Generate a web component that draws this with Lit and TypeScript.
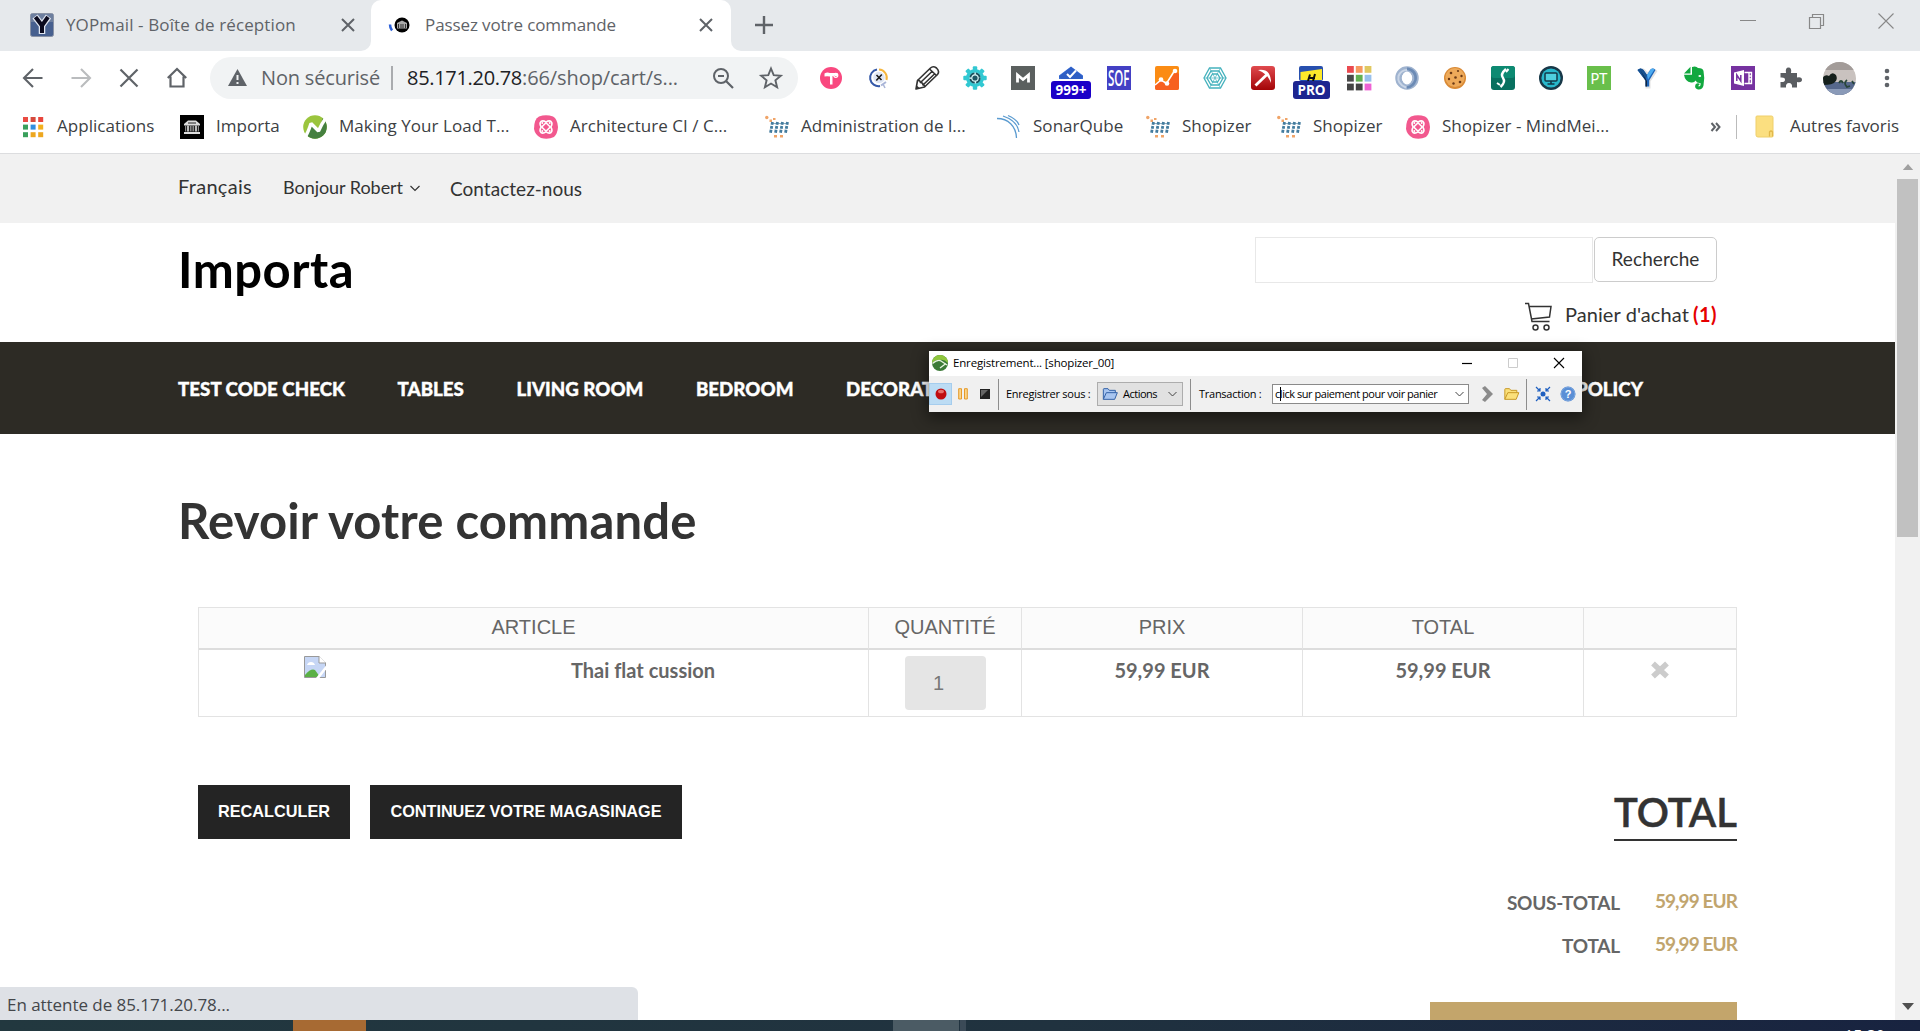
import { LitElement, html, svg, css } from "lit";
import { customElement } from "lit/decorators.js";

const icon = (body: unknown, size = 24) =>
  html`<svg class="ico" width=${size} height=${size} viewBox="0 0 24 24">${body}</svg>`;

const temple = svg`<path d="M4 9 L8 5.500 H16 L20 9 V10.500 H4Z" fill="#ddd"/><path d="M5 10.500h14v6H5z" fill="#888"/><path d="M4 17h16v2H4z" fill="#ddd"/><path d="M6.500 11v6M9.500 11v6M12 11v6M14.500 11v6M17.500 11v6M8 8h8" stroke="#222" stroke-width="1"/><path d="M8 10.500v6M16 10.500v6" stroke="#eee" stroke-width="1"/>`;

const dots = (cells: string[]) => cells.map((c, i) => svg`<rect x=${2 + (i % 3) * 7.6} y=${2 + Math.floor(i / 3) * 7.6} width="5" height="5" fill=${c}/>`);

const cartMark = svg`<g fill="#f0a468"><circle cx="1.800" cy="2.500" r="1.700"/><rect x="4.500" y="4.500" width="2.500" height="2.500"/><rect x="8" y="3" width="2.500" height="2"/><rect x="9" y="20" width="3" height="2.500"/><rect x="15" y="20" width="3" height="2.500"/></g><g fill="none" stroke="#447c9e" stroke-width="2.800" stroke-dasharray="2.900 1.100"><path d="M7.500 7L5.500 18"/><path d="M12.500 7L10.500 18"/><path d="M17.500 7L15.500 18"/><path d="M22.500 7L20.500 18"/></g><path d="M6 8.500h17" stroke="#447c9e" stroke-width="1" opacity=".6"/>`;
const pinkMark = svg`<path d="M5 1.500Q12-1 19 1.500 23.500 4 24 12 23.500 19 20 22 14 25 7 23 1 20 0 14 0 4 5 1.500Z" fill="#f2588e"/><g fill="none" stroke="#fff" stroke-width="1.600"><rect x="9" y="9" width="6" height="6" rx="1" transform="rotate(45 12 12)"/><path d="M12 7.200Q9 5 7 6.500 5 8.500 7.200 12 5 15.500 7 17.500 9 19 12 16.800 15 19 17 17.500 19 15.500 16.800 12 19 8.500 17 6.500 15 5 12 7.200Z"/></g><g fill="#fff"><circle cx="8.300" cy="8" r="1"/><circle cx="15.700" cy="8" r="1"/><circle cx="8.300" cy="16" r="1"/><circle cx="15.700" cy="16" r="1"/></g>`;
const leafMark = svg`<clipPath id="leaf"><circle cx="12" cy="12" r="11.800"/></clipPath><g clip-path="url(#leaf)"><rect width="24" height="24" fill="#9bc53d"/><path d="M0 24L7.500 8 15.500 17 20 2H24V24H0Z" fill="#45803f"/></g><path d="M1 24Q5 18 8 8.500L15.500 16Q18.500 9 23.500 2" fill="none" stroke="#fff" stroke-width="3.400" stroke-linejoin="bevel"/>`;
const sonarMark = svg`<g fill="none" stroke="#5b9bd0" stroke-width="1.300"><path d="M0 3.500C11 3.500 19 11 19.500 23"/><path d="M6 1C15 4 21 10 22 17"/><path d="M11 0.500C17 3 20.500 6 22 10"/></g>`;
const folderMark = svg`<path d="M1 2Q1 1 2 1H16.500Q18 1 18 2.500V21Q18 22 17 22H3Q1 22 1 20Z" fill="#fbdf80" stroke="#efcf6b"/><path d="M14.500 21.500V17Q16 15 17.500 17V21.500" fill="none" stroke="#e2b84a" stroke-width="1.300"/>`;

const bookmarks = [
  { i: svg`${dots(["#ea4b42", "#d64a3c", "#e8453c", "#3aa05c", "#2f8fe0", "#f2b01e", "#3aa05c", "#eda71f", "#eda71f"])}`, t: "Applications" },
  { i: svg`<rect width="24" height="24" fill="#000"/>${temple}`, t: "Importa" },
  { i: leafMark, t: "Making Your Load T..." },
  { i: pinkMark, t: "Architecture CI / C..." },
  { i: cartMark, t: "Administration de l..." },
  { i: sonarMark, t: "SonarQube" },
  { i: cartMark, t: "Shopizer" },
  { i: cartMark, t: "Shopizer" },
  { i: pinkMark, t: "Shopizer - MindMei..." },
];

const extensions = [
  svg`<circle cx="12" cy="12" r="11" fill="#f9487f"/><path d="M5.500 7.500Q8 6 11 7H18.500V10H16V9.500L13.500 10V18.500H11V10.500Q8 10 5.500 10.500Z" fill="#fff"/><circle cx="16.800" cy="9.300" r="2" fill="none" stroke="#fff" stroke-width="1.200"/>`,
  svg`<g fill="none" stroke-width="2"><path d="M10 3.500A8.300 8.300 0 0 0 13 20" stroke="#3458a8"/><path d="M12 3.500A8.300 8.300 0 0 1 19.500 14" stroke="#f6b63e"/><path d="M19 16L14 19.500" stroke="#aab6d8"/></g><circle cx="12" cy="11.500" r="5.800" fill="#dfe6f5"/><path d="M9.500 9l5 5M14.800 8.500l-5.500 6" stroke="#1a1a1a" stroke-width="1.600"/><path d="M16 18l2 4" stroke="#aab6d8" stroke-width="1.500"/>`,
  svg`<g fill="none" stroke="#333" stroke-width="1.600" stroke-linejoin="round"><path d="M1 23L2.500 14.500 15.500 2Q18-.5 21.500 2 25 5.500 22.500 8.500L9.500 21Z"/><path d="M2.500 14.500Q5 14 5.500 16.500 8 16.500 8 19 10 19 9.500 21M5.500 16.500L17.500 5M8 19L20 7.500M14.500 3L21.500 9.500"/></g><path d="M1 23l.8-3.500 2.700 2.600z" fill="#333"/>`,
  svg`<g fill="#32c8d2"><circle cx="12" cy="12" r="9"/>${[0, 45, 90, 135].map(a => svg`<rect x="9.800" y="0.300" width="4.400" height="23.400" rx="1" transform="rotate(${a} 12 12)"/>`)}</g><circle cx="12" cy="12" r="5.500" fill="#d8f3f5"/><circle cx="12" cy="12" r="4.700" fill="none" stroke="#194e5c" stroke-width="1.800" stroke-dasharray="6 1.500"/><circle cx="12" cy="12" r="2.600" fill="#1f5664"/>`,
  svg`<rect width="24" height="24" fill="#5b605f"/><path d="M6.500 16.500V9L12 13.500 17.500 9V16.500" fill="none" stroke="#fff" stroke-width="2.800"/>`,
  svg`<path d="M0 13V9.500L12 .5 24 9.500V13Z" fill="#3a6fd8"/><path d="M0 10.500L12 1l12 9.500-2 2.500H2Z" fill="#2f5fc4"/><path d="M8 8l3 3 6-6.500" fill="none" stroke="#fff" stroke-width="2"/>`,
  svg`<rect width="24" height="24" fill="#4340c4"/><text x="1" y="20" font-family="Open Sans, sans-serif" font-weight="600" font-size="21" fill="#fff" textLength="21.500" lengthAdjust="spacingAndGlyphs">SOF</text>`,
  svg`<rect width="24" height="24" rx="2" fill="#fb8c14"/><path d="M0 18L6 13 12 17 21 5 24 8V22Q24 24 22 24H2Q0 24 0 22Z" fill="#f7601f"/><path d="M0 19L6 14 11.500 17.500 19 5.500" fill="none" stroke="#fff" stroke-width="1.600"/><g fill="#fff"><circle cx="6" cy="13.500" r="2.300"/><circle cx="12" cy="17.500" r="2.300"/><circle cx="20" cy="5" r="2.300"/></g>`,
  svg`<g fill="none" stroke="#45b2bd" stroke-width="1.300"><path d="M6.500 2H17.500L23 12 17.500 22H6.500L1 12Z"/><path d="M8 5H16L20 12 16 19H8L4 12Z"/><path d="M9.500 8H14.500L17 12 14.500 16H9.500L7 12Z"/><path d="M1 12H23M6.500 2L17.500 22M17.500 2L6.500 22" stroke-width=".7"/></g>`,
  svg`<linearGradient id="rg" x2="0" y2="1"><stop stop-color="#e04a4e"/><stop offset="1" stop-color="#a30407"/></linearGradient><rect width="24" height="24" rx="3" fill="url(#rg)"/><path d="M4.500 19.500L17 7.500" stroke="#fff" stroke-width="2.800"/><path d="M7 4Q20 2 20 17 17 10 14.500 8.500 12 6 7 4Z" fill="#fff"/>`,
  svg`<rect width="24" height="15" rx="2" fill="#274fae"/><path d="M1.500 6L23 3V14H1.500Z" fill="#fde92a"/><path d="M9 15L11 8.500M14 15L16 8M10 12h6" stroke="#111" stroke-width="2"/>`,
  svg`${["#ea4a50", "#f69a60", "#e0c860", "#4a4a4a", "#62b052", "#98c0ec", "#444", "#444", "#ee62d4"].map((c, i) => svg`<rect x=${(i % 3) * 8.8} y=${Math.floor(i / 3) * 8.8} width="6.800" height="6.800" fill=${c}/>`)}`,
  svg`<circle cx="12" cy="12" r="8.500" fill="none" stroke="#9fb3cf" stroke-width="6.500"/><path d="M12 2.500Q22 5 20.500 14 18 21 12 21.500" fill="none" stroke="#6c8bb5" stroke-width="2.500"/><path d="M11 21.500Q2 18 3.500 10 6 4 12 4" fill="none" stroke="#c9d5e6" stroke-width="2"/><ellipse cx="12" cy="12" rx="5" ry="6.500" fill="#fff"/>`,
  svg`<circle cx="12" cy="12" r="11" fill="#d98a35"/><circle cx="12" cy="11.500" r="9.600" fill="#eeaa5a"/><g fill="#6b3a16"><circle cx="8" cy="7" r="1.300"/><circle cx="15" cy="5" r="1.100"/><circle cx="18.500" cy="10" r="1.200"/><circle cx="12.500" cy="11.500" r="1.300"/><circle cx="6" cy="13" r="1.200"/><circle cx="10.500" cy="17.500" r="1.200"/><circle cx="17" cy="16" r="1.300"/></g>`,
  svg`<rect width="24" height="24" rx="3" fill="#08705f"/><rect width="24" height="12" rx="3" fill="#0d8a72"/><path d="M15 3Q9 8 12 12 15 16 9.500 21" fill="none" stroke="#fff" stroke-width="2.400"/><path d="M15 6l2.500-3M9 19l-3-2" stroke="#fff" stroke-width="2"/>`,
  svg`<circle cx="12" cy="12" r="12" fill="#183848"/><circle cx="12" cy="12" r="9.600" fill="#28b8cc"/><rect x="6" y="7" width="12" height="8" rx="1" fill="#4fd0df" stroke="#12394a" stroke-width="1.500"/><path d="M12 15v3M8.500 18h7" stroke="#12394a" stroke-width="1.600"/>`,
  svg`<rect width="24" height="24" fill="#69bf4b"/><text x="3.500" y="17.500" font-family="Lato, sans-serif" font-weight="400" font-size="15.500" fill="#fff" textLength="17" lengthAdjust="spacingAndGlyphs">PT</text>`,
  svg`<path d="M4 3.500Q8 0 12.500 6 18 0 22.500 5L15.500 15.500V22.500H10.500V15.500Z" fill="#e2e2e2"/><path d="M2.500 4Q5.500 1 8.500 4L12 9 15.500 3.500Q18 1.500 20.500 4L14.200 14.500V20.500H10.500V14.500Z" fill="#1b63b8"/><path d="M2.500 4Q5.500 1 8.500 4L12 9 10.500 14.500Z" fill="#16508f"/><path d="M5.500 4.500L12 15V20.500H10.500V14.500Z" fill="#10243f"/><path d="M12 9l4-6q2-1 3.500 .5l-6.500 10z" fill="#4cabf0"/>`,
  svg`<path d="M1 7.500L7.500 .8V7.500ZM9 1Q13-.5 15 2 20 2 20.500 5 22 12 20.500 19.500 19.500 24 15 23.500 11 22.500 12.500 18.500 14.500 16.500 17 18 15 19 15.500 20.500 18 20.500 17.500 17 14 17.500 12.500 14.500 11.500 17 8 16.500 2 15.500 1 8.700H9Z" fill="#12a83f"/><ellipse cx="16.800" cy="10" rx="1.400" ry=".9" fill="#fff"/>`,
  svg`<rect width="24" height="24" fill="#7632a0"/><path d="M3 6.500L13 4V20L3 17.500Z" fill="#fff"/><path d="M13.500 6.500H20.500V17.500H13.500M18 7v10M20 10h-2M20 13h-2" fill="none" stroke="#fff" stroke-width="1.400"/><path d="M5.800 15V9l4 6V9" fill="none" stroke="#7632a0" stroke-width="1.500"/>`,
  svg`<path d="M2 7H7.500Q6.500 1.500 10 1.500 13.500 1.500 12.500 7H18.500V11.500Q23.500 10.500 23.500 13.800 23.500 17 18.500 16V21.500H13.500Q14 17 10.500 17 7 17 7.500 21.500H2V16Q6.500 16.500 6.500 13.800 6.500 11 2 11.500Z" fill="#5a5d61" transform="translate(-.5 0)"/>`,
];

const folder = (a: string, b: string) => svg`<path d="M2 20V5Q2 4 3 4H9L11 6.500H20V11" fill=${a} stroke=${b} stroke-width="1.500"/><path d="M2 20L6.500 10H23L19 20Z" fill=${a} stroke=${b} stroke-width="1.500"/>`;

const base = css`
  * { box-sizing: border-box; }
  svg { display: block; flex: none; overflow: visible; }
  span { white-space: pre; }
`;

@customElement("browser-chrome")
class BrowserChrome extends LitElement {
  static styles = [base, css`
    :host { display: block; height: 154px; font-family: "Open Sans", "Noto Sans", sans-serif; font-size: 17px; color: #5f6368; border-bottom: 1px solid #dcdddf; background: #fff; }
    .tabs { display: grid; grid-template-columns: 371px 360px 1fr; height: 51px; background: #e6e9ec; }
    .idle { display: flex; align-items: center; height: 51px; padding: 0 16px 1px 30px; background: #e6e9ec; border-bottom-right-radius: 10px; }
    .active { display: flex; align-items: center; padding: 0 18px 1px 18px; background: #fff; border-radius: 10px 10px 0 0; }
    .under { background: linear-gradient(#e6e9ec, #e6e9ec 30px, #fff 30px); }
    .rest { height: 51px; background: #e6e9ec; border-bottom-left-radius: 10px; display: flex; justify-content: space-between; padding: 0 26px 0 24px; }
    .plus { margin-top: 16px; }
    .ctl { display: flex; gap: 53px; margin-top: 13px; }
    .title { flex: 1; padding: 0 0 2px 12px; letter-spacing: .12px; }
    .title2 { flex: 1; padding: 0 0 2px 15px; letter-spacing: -.1px; }
    .bar { display: flex; align-items: center; height: 54px; padding-left: 21px; }
    .nav { display: flex; gap: 24px; width: 189px; }
    .pill { display: flex; align-items: center; width: 588px; height: 42px; border-radius: 21px; background: #f1f3f4; padding-left: 18px; font-size: 20px; }
    .insecure { flex: none; width: 144px; padding-left: 14px; height: 30px; line-height: 30px; letter-spacing: -.18px; }
    .div { width: 2px; height: 24px; background: #a9abae; }
    .url { flex: none; width: 318px; padding-left: 14px; line-height: 30px; height: 30px; letter-spacing: -.08px; }
    .host { color: #202124; letter-spacing: -.31px; }
    .star { margin-left: 24px; }
    .exts { display: grid; grid-template-columns: repeat(23, 48px); margin-left: 9px; justify-items: center; align-items: center; }
    .ext { position: relative; width: 24px; height: 24px; }
    .badge { position: absolute; left: -8px; top: 15px; width: 40px; height: 18px; border-radius: 3px; background: #1a00c8; color: #fff; font: 700 13.500px/18px "Open Sans", sans-serif; text-align: center; }
    .pro { left: -6px; width: 37px; background: #1d2590; }
    .marks { display: grid; grid-template-columns: 159px 123px 231px 231px 232px 149px 131px 129px 305px 25px 1fr; padding-left: 21px; height: 43px; align-items: center; color: #3c4043; letter-spacing: .04px; }
    .mark { display: flex; align-items: center; gap: 12px; }
    .mark span, .other span { padding-bottom: 3px; }
    .other { display: flex; align-items: center; border-left: 1px solid #bbb; height: 24px; padding-left: 18px; gap: 11px; letter-spacing: -.03px; }
  `];
  render() {
    const close = html`<svg width="14" height="14" viewBox="0 0 14 14"><path d="M1 1L13 13M13 1L1 13" stroke="#5f6368" stroke-width="2"/></svg>`;
    return html`
      <div class="tabs">
        <div class="under"><div class="idle">
          ${icon(svg`<rect x=".5" y=".5" width="23" height="23" rx="2" fill="#47608f" stroke="#8a93a5"/><rect x="1" y="1" width="22" height="8" fill="#6d7f9f"/><path d="M5 3.500L12 12.500 18.500 3.500M12 12V21" fill="none" stroke="#dfe5f0" stroke-width="6.500"/><path d="M5.500 4L12 12.500 18 4M12 12V20" fill="none" stroke="#0a0a1e" stroke-width="4"/>`)}
          <span class="title">YOPmail - Boîte de réception</span>${close}
        </div></div>
        <div class="active">
          <svg width="21" height="16" viewBox="0 0 21 16"><circle cx="13" cy="8" r="7.500" fill="#000"/><path d="M8 6L13 3.500 18 6V11.500H8Z" fill="#aaa"/><path d="M9.500 7v4M12 7v4M14 7v4M16.500 7v4" stroke="#333"/><path d="M1 7.500Q1 11 3 13.500" fill="none" stroke="#2a5fd8" stroke-width="2.500"/></svg>
          <span class="title2">Passez votre commande</span>${close}
        </div>
        <div class="under"><div class="rest">
          <svg class="plus" width="18" height="18" viewBox="0 0 18 18"><path d="M9 0V18M0 9H18" stroke="#5f6368" stroke-width="2.400"/></svg>
          <div class="ctl">
            <svg width="16" height="16" viewBox="0 0 16 16"><path d="M0 7.500H16" stroke="#888"/></svg>
            <svg width="16" height="16" viewBox="0 0 16 16"><path d="M.5 4.500H11.500V15.500H.5ZM3.500 4.500V1.500H14.500V12.500H11.500" fill="none" stroke="#888" stroke-width="1.200"/></svg>
            <svg width="16" height="16" viewBox="0 0 16 16"><path d="M.5 .5L15.500 15.500M15.500 .5L.5 15.500" stroke="#888" stroke-width="1.100"/></svg>
          </div>
        </div></div>
      </div>
      <div class="bar">
        <div class="nav">
          ${icon(svg`<path d="M21.500 12H3.500M12 3L3 12 12 21" fill="none" stroke="#5f6368" stroke-width="2.100"/>`)}
          ${icon(svg`<path d="M2.500 12H20.500M12 3L21 12 12 21" fill="none" stroke="#babcbe" stroke-width="2.100"/>`)}
          ${icon(svg`<path d="M3.500 3.500L20.500 20.500M20.500 3.500L3.500 20.500" stroke="#5f6368" stroke-width="2.200"/>`)}
          ${icon(svg`<path d="M2.800 12L12 3 21.200 12M5.500 10.500V20.500H18.500V10.500" fill="none" stroke="#5f6368" stroke-width="2.200"/>`)}
        </div>
        <div class="pill">
          <svg width="19" height="18" viewBox="0 0 19 18"><path d="M9.500 0L19 17H0Z" fill="#5f6368"/><path d="M9.500 6v5M9.500 13v2" stroke="#f1f3f4" stroke-width="2"/></svg>
          <span class="insecure">Non sécurisé</span><i class="div"></i>
          <span class="url"><span class="host">85.171.20.78</span>:66/shop/cart/s...</span>
          ${icon(svg`<circle cx="10" cy="10" r="7" fill="none" stroke="#5f6368" stroke-width="2"/><path d="M15 15L22 22M7 10H13" stroke="#5f6368" stroke-width="2.200"/>`)}
          <span class="star">${icon(svg`<path d="M12 2.500L14.700 9.200 21.800 9.700 16.400 14.300 18.100 21.300 12 17.500 5.900 21.300 7.600 14.300 2.200 9.700 9.300 9.200Z" fill="none" stroke="#5f6368" stroke-width="1.900"/>`)}</span>
        </div>
        <div class="exts">
          ${extensions.map((e, i) => html`<div class="ext">${icon(e)}${i === 5 ? html`<b class="badge">999+</b>` : i === 10 ? html`<b class="badge pro">PRO</b>` : ""}</div>`)}
          <svg width="33" height="33" viewBox="0 0 33 33"><clipPath id="av"><circle cx="16.500" cy="16.500" r="16.500"/></clipPath><g clip-path="url(#av)"><rect width="33" height="33" fill="#c9c2bf"/><rect width="33" height="8" fill="#a39c99"/><path d="M0 20H33V33H0Z" fill="#56688c"/><path d="M0 27H33V33H0Z" fill="#8a9ab8"/><path d="M0 15Q3 12 6 14 9 9 13 13 15 17 12 20 10 23 0 23Z" fill="#15201c"/><path d="M16 21Q18 17 20 21M24 18Q20 21 24 25L27 24M29 19l2 3" fill="none" stroke="#28463a" stroke-width="1.800"/></g></svg>
          ${icon(svg`<g fill="#5f6368"><circle cx="12" cy="5" r="2.300"/><circle cx="12" cy="12" r="2.300"/><circle cx="12" cy="19" r="2.300"/></g>`)}
        </div>
      </div>
      <div class="marks">
        ${bookmarks.map(b => html`<div class="mark">${icon(b.i)}<span>${b.t}</span></div>`)}
        <svg width="12" height="12" viewBox="0 0 12 12"><path d="M.5 2L4 6 .5 10M5 2L8.500 6 5 10" fill="none" stroke="#5f6368" stroke-width="2"/></svg>
        <div class="other">${icon(folderMark)}<span>Autres favoris</span></div>
      </div>`;
  }
}

@customElement("recorder-window")
class RecorderWindow extends LitElement {
  static styles = [base, css`
    :host { display: block; width: 653px; height: 61px; background: #f0f0f0; box-shadow: 0 4px 14px 2px rgba(0,0,0,.45); font-family: "Open Sans", sans-serif; font-size: 11px; color: #000; letter-spacing: -.26px; }
    .title { display: flex; align-items: center; height: 25px; background: #fff; padding: 0 17px 1px 3px; }
    .cap { flex: 1; padding: 0 0 1px 5px; font-size: 11.500px; letter-spacing: -.17px; }
    .ctl { display: flex; gap: 34px; }
    .tools { display: flex; align-items: center; height: 36px; }
    .rec { width: 23px; height: 22px; background: #bcdcf4; border: 1px solid #a5cdee; display: grid; place-items: center; }
    .pause { margin-left: 6px; } .stop { margin-left: 12px; }
    .sep { width: 1px; height: 31px; background: #8d8d8d; margin-left: 8px; }
    .l1 { margin-left: 7px; width: 91px; padding-bottom: 1px; }
    .drop { width: 86px; height: 24px; background: #e1e1e1; border: 1px solid #adadad; display: flex; align-items: center; padding: 0 5px 0 4px; }
    .act { flex: 1; padding: 0 0 1px 5px; letter-spacing: -.5px; }
    .s2 { margin-left: 7px; }
    .l2 { margin-left: 8px; width: 73px; padding-bottom: 1px; }
    .combo { width: 197px; height: 20px; background: #fff; border: 1px solid #8a8a8a; display: flex; align-items: center; justify-content: space-between; padding: 0 4px 0 2px; position: relative; letter-spacing: -.46px; }
    .combo span { padding-bottom: 1px; }
    .caret { position: absolute; left: 7px; top: 2px; width: 1px; height: 14px; background: #000; }
    .go { margin-left: 13px; } .open { margin-left: 10px; } .s3 { margin-left: 6px; } .fit { margin-left: 8px; } .help { margin-left: 9px; }
  `];
  render() {
    const chev = html`<svg width="9" height="6" viewBox="0 0 9 6"><path d="M.5 1L4.500 5 8.500 1" fill="none" stroke="#444"/></svg>`;
    return html`
      <div class="title">
        <svg width="16" height="16" viewBox="0 0 16 16"><circle cx="8" cy="8" r="8" fill="#3c7a38"/><path d="M0 8A8 8 0 0 1 16 8Q12 4 8 5 4 4 0 8Z" fill="#8fc63d"/><path d="M.5 8.500Q6 4 9 6L15 10M8 13L14 8.500" fill="none" stroke="#e8f4e0" stroke-width="1.300"/></svg>
        <span class="cap">Enregistrement... [shopizer_00]</span>
        <div class="ctl">
          <svg width="12" height="12" viewBox="0 0 12 12"><path d="M1 6.500H11" stroke="#000" stroke-width="1.200"/></svg>
          <svg width="12" height="12" viewBox="0 0 12 12"><path d="M1.500 1.500H10.500V10.500H1.500Z" fill="none" stroke="#ccc"/></svg>
          <svg width="12" height="12" viewBox="0 0 12 12"><path d="M1 1L11 11M11 1L1 11" stroke="#000" stroke-width="1.100"/></svg>
        </div>
      </div>
      <div class="tools">
        <div class="rec"><svg width="12" height="12" viewBox="0 0 12 12"><circle cx="6" cy="6" r="5.500" fill="#c00d10"/><ellipse cx="6" cy="3.500" rx="3" ry="1.800" fill="#e8706c"/></svg></div>
        <svg class="pause" width="10" height="12" viewBox="0 0 10 12"><path d="M.7 .7H3.500V11H.7ZM6.500 .7H9.300V11H6.500Z" fill="#fcd58a" stroke="#e59a2a"/></svg>
        <svg class="stop" width="10" height="10" viewBox="0 0 10 10"><rect width="10" height="10" fill="#222"/><path d="M1 1H8L1 8Z" fill="#666"/></svg>
        <i class="sep"></i><span class="l1">Enregistrer sous :</span>
        <div class="drop"><svg width="16" height="16" viewBox="0 0 24 24">${folder("#a8c5f0", "#3563a8")}</svg><span class="act">Actions</span>${chev}</div>
        <i class="sep s2"></i><span class="l2">Transaction :</span>
        <div class="combo"><span>click sur paiement pour voir panier</span><i class="caret"></i>${chev}</div>
        <svg class="go" width="11" height="16" viewBox="0 0 11 16"><path d="M0 2L3 0 11 8 3 16 0 14 5 8Z" fill="#8b8b8b"/></svg>
        <svg class="open" width="17" height="16" viewBox="0 0 24 24">${folder("#fbe07a", "#c89a28")}</svg>
        <i class="sep s3"></i>
        <svg class="fit" width="16" height="16" viewBox="0 0 16 16"><circle cx="8" cy="8" r="2.500" fill="#1e5fc0"/><path d="M1 1L5 5M15 1L11 5M1 15L5 11M15 15L11 11M2 5H5V2M14 5H11V2M2 11H5V14M14 11H11V14" fill="none" stroke="#1e5fc0" stroke-width="1.200"/></svg>
        <svg class="help" width="16" height="16" viewBox="0 0 16 16"><circle cx="8" cy="8" r="7.500" fill="#5a8fd6"/><circle cx="8" cy="8" r="6.800" fill="none" stroke="#7ba5dd"/><text x="8" y="12" text-anchor="middle" font-family="Liberation Sans" font-weight="700" font-size="11" fill="#fff">?</text></svg>
      </div>`;
  }
}

@customElement("shop-page")
class ShopPage extends LitElement {
  static styles = [base, css`
    :host { display: block; width: 1895px; height: 866px; background: #fff; overflow: hidden; font-family: Lato, "Open Sans", sans-serif; color: #666; }
    .top { display: flex; height: 69px; padding-left: 178px; background: #f1f1f1; color: #333; font-size: 19px; line-height: 24px; }
    .fr { margin-top: 20px; width: 105px; font-size: 20px; letter-spacing: .3px; }
    .hi { margin-top: 21px; width: 127px; font-size: 18px; letter-spacing: -.04px; }
    .chev { margin: 31px 30px 0 0; }
    .ct { margin-top: 23px; letter-spacing: .04px; }
    .head { display: flex; justify-content: space-between; height: 119px; padding: 14px 178px 0 178px; }
    .logo { font-size: 49px; line-height: 60px; font-weight: 700; color: #000; margin-top: 2px; letter-spacing: .5px; }
    .right { display: flex; flex-direction: column; align-items: flex-end; width: 462px; }
    .search { display: flex; gap: 1px; }
    .field { width: 338px; height: 46px; border: 1px solid #e8e8e8; }
    .btn { width: 123px; height: 45px; border: 1px solid #ccc; border-radius: 5px; text-align: center; font-size: 19px; line-height: 42px; letter-spacing: .08px; color: #333; }
    .cart { display: flex; align-items: center; margin-top: 17px; height: 32px; font-size: 20px; color: #333; line-height: 24px; }
    .cart span { padding-bottom: 5px; letter-spacing: .09px; }
    .cart svg { margin-right: 13px; }
    .cart .n { color: #e60000; font-weight: 700; margin-left: 4px; letter-spacing: .5px; }
    .menu { display: flex; align-items: center; height: 92px; padding: 2px 252px 0 178px; background: #2d2b25; color: #fff; font-weight: 900; font-size: 18.700px; gap: 52.500px; letter-spacing: .03px; -webkit-text-stroke: .4px #fff; }
    .last { margin-left: auto; }
    .main { padding: 56px 158px 0 178px; }
    h1 { margin: 0; font-size: 49px; line-height: 60px; font-weight: 700; letter-spacing: .14px; color: #333; }
    .table { display: grid; grid-template-columns: 670px 153px 281px 281px 153px; margin: 57px 0 0 20px; width: 1539px; border: 1px solid #e3e3e3; border-right: 0; }
    .th { height: 42px; background: #fbfbfb; border-right: 1px solid #e3e3e3; border-bottom: 2px solid #ddd; font: 20px/39px "Liberation Sans", Arial, sans-serif; text-align: center; }
    .td { height: 66px; border-right: 1px solid #e3e3e3; text-align: center; font-weight: 700; font-size: 20px; line-height: 24px; padding-top: 8px; }
    .art { display: grid; grid-template-columns: 160px 404px; justify-content: end; }
    .art svg { margin: -2px 0 0 0; justify-self: start; } .name { padding-right: 46px; letter-spacing: .01px; }
    .qty { width: 81px; height: 54px; margin: -2px auto 0 36px; background: #e5e5e5; border-radius: 4px; font: 20px/54px "Liberation Sans", sans-serif; color: #777; text-align: left; padding-left: 28px; }
    .x { margin: 3px auto 0; }
    .foot { display: flex; justify-content: space-between; padding: 68px 0 0 20px; }
    .acts { display: flex; gap: 20px; }
    .act { height: 54px; background: #242424; color: #fff; font: 700 16.300px/53px "Liberation Sans", Arial, sans-serif; text-align: center; }
    .a1 { width: 152px; } .a2 { width: 312px; letter-spacing: -.05px; }
    .sum { display: flex; flex-direction: column; align-items: flex-end; }
    h2 { margin: 3px 0 0; height: 53px; font-size: 40px; line-height: 48px; font-weight: 600; color: #333; border-bottom: 2px solid #333; -webkit-text-stroke: .5px #333; }
    .row { display: flex; font-weight: 700; font-size: 19px; height: 43px; line-height: 24px; letter-spacing: -.22px; }
    .r1 { margin-top: 48px; }
    .lab { margin-right: 35px; padding-top: 2px; }
    .val { color: #c1a56e; letter-spacing: -.92px; }
    .pay { width: 307px; height: 30px; background: #c3a56b; margin-top: 27px; }
  `];
  render() {
    return html`
      <div class="top"><span class="fr">Français</span><span class="hi">Bonjour Robert</span>
        <svg class="chev" width="10" height="7" viewBox="0 0 10 7"><path d="M.5 1L5 5.500 9.500 1" fill="none" stroke="#333" stroke-width="1.200"/></svg>
        <span class="ct">Contactez-nous</span></div>
      <div class="head"><div class="logo">Importa</div>
        <div class="right">
          <div class="search"><div class="field"></div><div class="btn">Recherche</div></div>
          <div class="cart"><svg width="27" height="29" viewBox="0 0 27 29"><g fill="none" stroke="#333" stroke-width="1.500"><path d="M0 1.500H3.500L7 19.500H24.500M4.500 4.500H26L24.500 15 6.200 17"/><circle cx="10.500" cy="25.500" r="2.500"/><circle cx="21.500" cy="25.500" r="2.500"/></g></svg><span>Panier d'achat</span><span class="n">(1)</span></div>
        </div></div>
      <div class="menu">${["TEST CODE CHECK", "TABLES", "LIVING ROOM", "BEDROOM", "DECORATION"].map(m => html`<span>${m}</span>`)}<span class="last">POLICY</span></div>
      <div class="main"><h1>Revoir votre commande</h1>
        <div class="table">
          ${["ARTICLE", "QUANTITÉ", "PRIX", "TOTAL", ""].map(h => html`<div class="th">${h}</div>`)}
          <div class="td art"><svg width="22" height="22" viewBox="0 0 22 22"><path d="M.5 .5H15L21.500 7V21.500H.5Z" fill="#c6d6f5" stroke="#999"/><path d="M15 0V7H22" fill="#fff" stroke="#999"/><path d="M1 21V19Q7 12 11 14L16 21Z" fill="#5ab045"/><path d="M3 9Q4 6 7 6 10 6 11 9Z" fill="#fff"/><path d="M22 9.500L12 22H15.500L22 13.500Z" fill="#fff"/></svg><span class="name">Thai flat cussion</span></div>
          <div class="td"><div class="qty">1</div></div>
          <div class="td">59,99 EUR</div><div class="td">59,99 EUR</div>
          <div class="td"><svg class="x" width="20" height="18" viewBox="0 0 20 18"><path d="M3 2.500L17 15.500M17 2.500L3 15.500" stroke="#ccc" stroke-width="5.500"/></svg></div>
        </div>
        <div class="foot"><div class="acts"><div class="act a1">RECALCULER</div><div class="act a2">CONTINUEZ VOTRE MAGASINAGE</div></div>
          <div class="sum"><h2>TOTAL</h2>
            <div class="row r1"><span class="lab">SOUS-TOTAL</span><span class="val">59,99 EUR</span></div>
            <div class="row"><span class="lab">TOTAL</span><span class="val">59,99 EUR</span></div>
            <div class="pay"></div></div></div>
      </div>`;
  }
}

@customElement("app-root")
class AppRoot extends LitElement {
  static styles = [base, css`
    :host { display: block; position: relative; width: 1920px; height: 1031px; overflow: hidden; background: #fff; font-family: "Open Sans", sans-serif; }
    .body { display: grid; grid-template-columns: 1895px 25px; height: 866px; }
    .scroll { background: #f1f1f1; display: flex; flex-direction: column; align-items: center; padding-top: 10px; }
    .up { height: 6px; } .thumb { width: 21px; height: 358px; background: #c1c1c1; margin-top: 9px; }
    .down { margin-top: auto; margin-bottom: 10px; }
    .win { position: absolute; left: 929px; top: 351px; }
    .status { position: absolute; left: 0; top: 987px; width: 638px; height: 33px; background: #dee1e6; border-radius: 0 6px 0 0; color: #44474b; font-size: 17px; line-height: 35px; padding-left: 7px; letter-spacing: -.05px; }
    .task { display: flex; height: 11px; background: linear-gradient(90deg, #22383f, #20323f 55%, #182340); overflow: hidden; }
    .o { width: 73px; margin-left: 293px; background: #a76a33; } .g { width: 66px; margin-left: 527px; background: #4b5b64; } .g2 { width: 6px; margin-left: 1px; background: #3b4a57; }
    .clock { margin-left: auto; padding: 6px 35px 0 0; color: #fff; font-size: 16px; line-height: 20px; }
  `];
  render() {
    return html`
      <browser-chrome></browser-chrome>
      <div class="body"><shop-page></shop-page>
        <div class="scroll"><svg class="up" width="12" height="7" viewBox="0 0 12 7"><path d="M0 7L6 0 12 7Z" fill="#a0a0a0"/></svg><div class="thumb"></div><svg class="down" width="12" height="7" viewBox="0 0 12 7"><path d="M0 0L6 7 12 0Z" fill="#505050"/></svg></div>
      </div>
      <div class="task"><i class="o"></i><i class="g"></i><i class="g2"></i><span class="clock">15:30</span></div>
      <div class="status">En attente de 85.171.20.78...</div>
      <div class="win"><recorder-window></recorder-window></div>`;
  }
}
